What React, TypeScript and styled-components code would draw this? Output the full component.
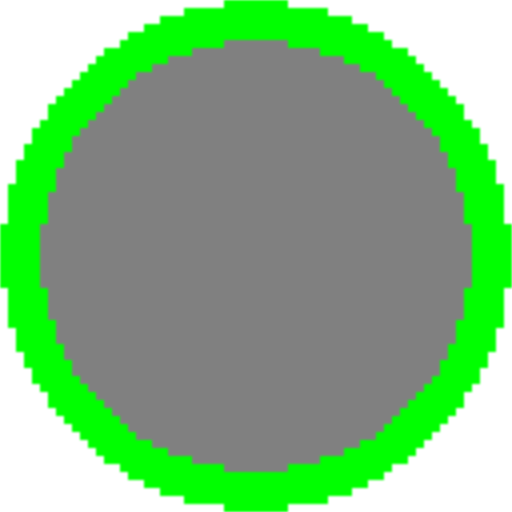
import React from "react";
import styled, { createGlobalStyle } from "styled-components";

const Global = createGlobalStyle`
  html, body { margin: 0; padding: 0; background: #ffffff; }
  #root { width: 512px; height: 512px; }
`;

const Stage = styled.div`
  width: 512px;
  height: 512px;
  display: flex;
  align-items: center;
  justify-content: center;
  background: #ffffff;
  overflow: hidden;
`;

const Drawing = styled.svg`
  display: block;
  filter: blur(1px);
`;

const CELL = 8;
const N = 512 / CELL;
const R_OUT = 254;
const R_IN = 215;

function buildCells() {
  const cells: { x: number; y: number; c: string }[] = [];
  for (let j = 0; j < N; j++) {
    for (let i = 0; i < N; i++) {
      const cx = (i + 0.5) * CELL - 256;
      const cy = (j + 0.5) * CELL - 256;
      const d = Math.sqrt(cx * cx + cy * cy);
      if (d > R_OUT) continue;
      cells.push({ x: i * CELL, y: j * CELL, c: d > R_IN ? "#00ff00" : "#808080" });
    }
  }
  return cells;
}

const Ring: React.FC = () => {
  const cells = React.useMemo(buildCells, []);
  return (
    <Drawing width={512} height={512} viewBox="0 0 512 512" shapeRendering="crispEdges">
      {cells.map((p, k) => (
        <rect key={k} x={p.x} y={p.y} width={CELL} height={CELL} fill={p.c} />
      ))}
    </Drawing>
  );
};

export default function App() {
  return (
    <>
      <Global />
      <Stage>
        <Ring />
      </Stage>
    </>
  );
}
